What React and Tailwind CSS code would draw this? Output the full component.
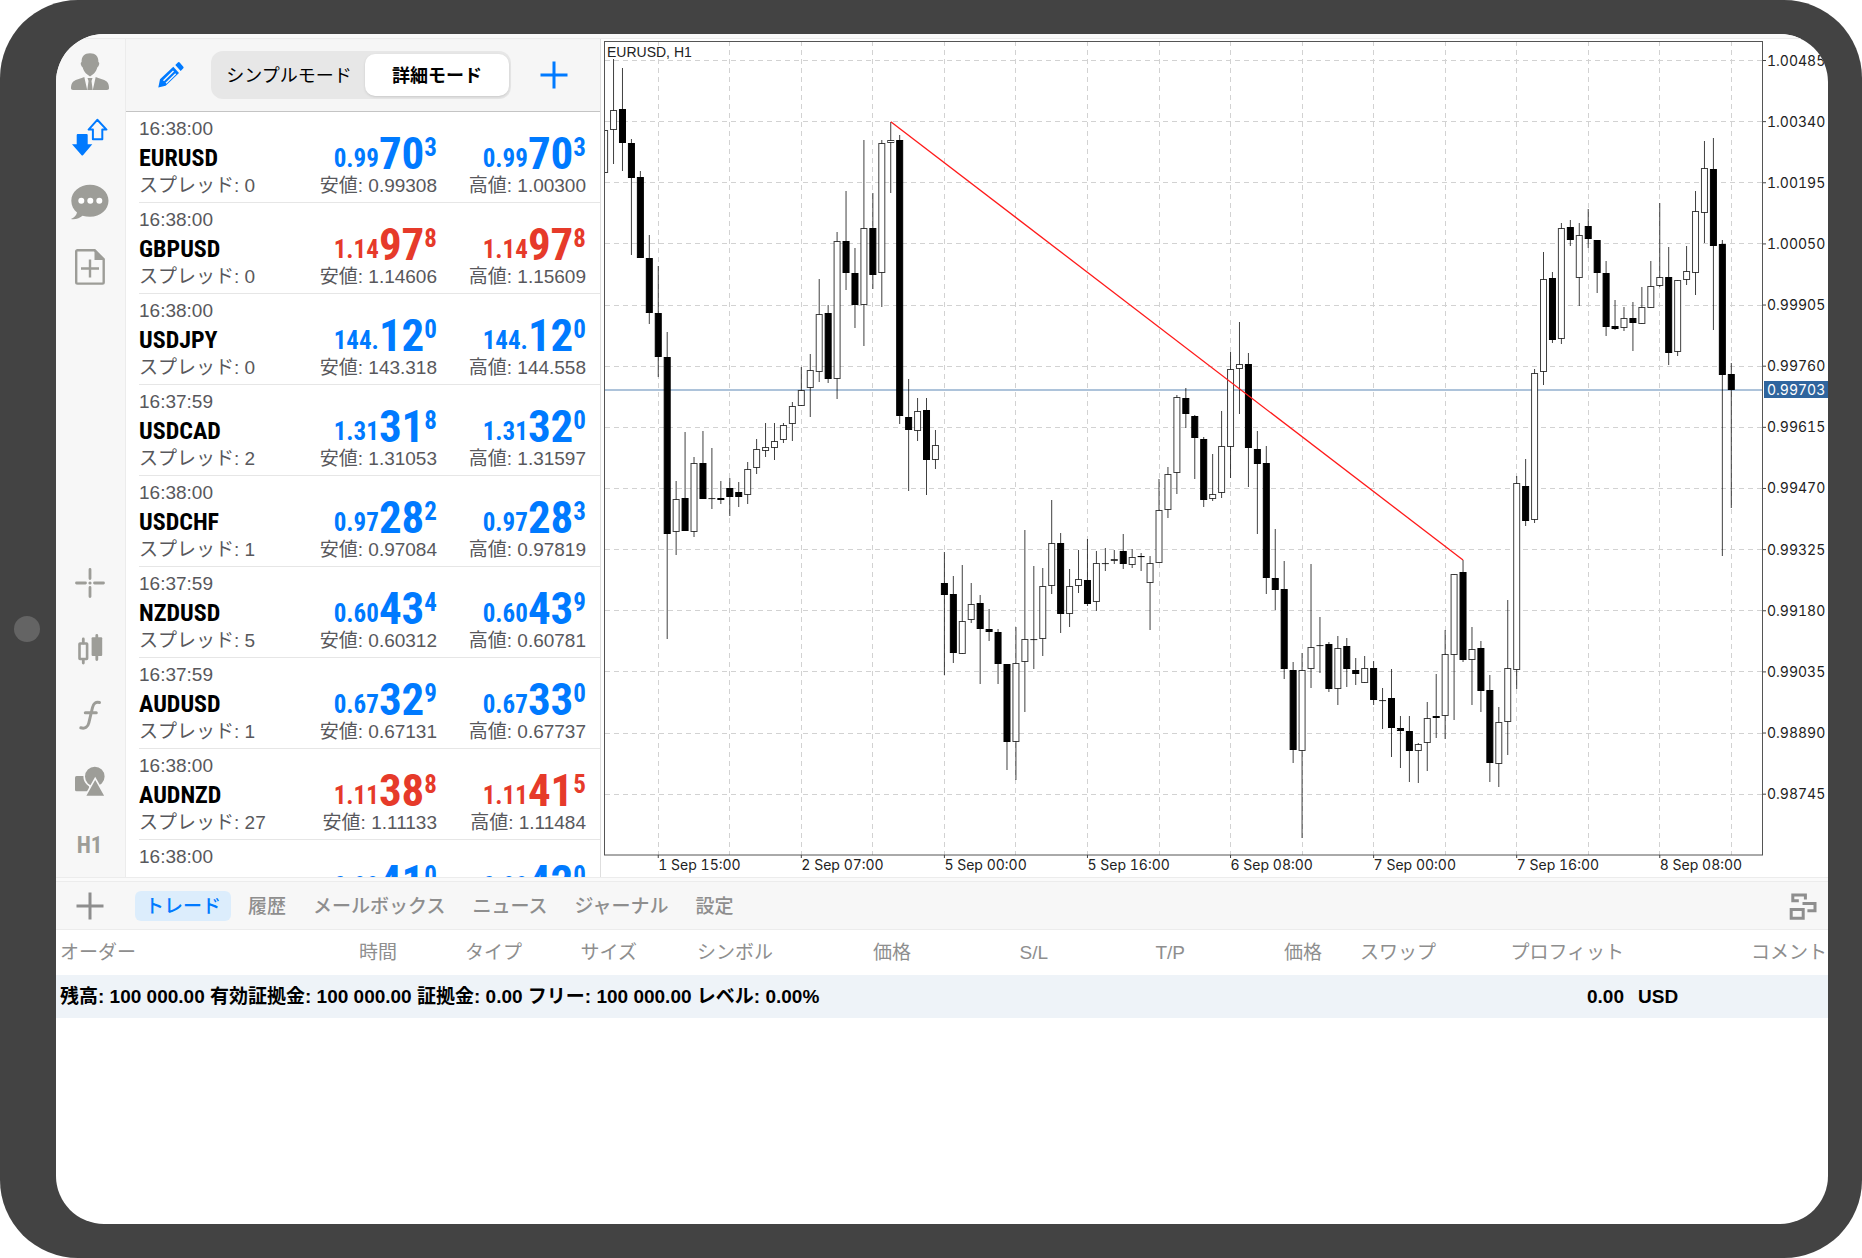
import React, { useState } from "react";

const quotes = [
  { time: "16:38:00", symbol: "EURUSD", spread: 0, low: "0.99308", high: "1.00300", bid: ["0.99", "70", "3"], ask: ["0.99", "70", "3"], up: true },
  { time: "16:38:00", symbol: "GBPUSD", spread: 0, low: "1.14606", high: "1.15609", bid: ["1.14", "97", "8"], ask: ["1.14", "97", "8"], up: false },
  { time: "16:38:00", symbol: "USDJPY", spread: 0, low: "143.318", high: "144.558", bid: ["144.", "12", "0"], ask: ["144.", "12", "0"], up: true },
  { time: "16:37:59", symbol: "USDCAD", spread: 2, low: "1.31053", high: "1.31597", bid: ["1.31", "31", "8"], ask: ["1.31", "32", "0"], up: true },
  { time: "16:38:00", symbol: "USDCHF", spread: 1, low: "0.97084", high: "0.97819", bid: ["0.97", "28", "2"], ask: ["0.97", "28", "3"], up: true },
  { time: "16:37:59", symbol: "NZDUSD", spread: 5, low: "0.60312", high: "0.60781", bid: ["0.60", "43", "4"], ask: ["0.60", "43", "9"], up: true },
  { time: "16:37:59", symbol: "AUDUSD", spread: 1, low: "0.67131", high: "0.67737", bid: ["0.67", "32", "9"], ask: ["0.67", "33", "0"], up: true },
  { time: "16:38:00", symbol: "AUDNZD", spread: 27, low: "1.11133", high: "1.11484", bid: ["1.11", "38", "8"], ask: ["1.11", "41", "5"], up: false },
  { time: "16:38:00", symbol: "AUDCAD", bid: ["0.88", "41", "0"], ask: ["0.88", "42", "0"], up: true },
];

// [falling, high, body top, body bottom, low]
const candles = [
  [0, 130, 130, 173, 173], [0, 59, 110, 130, 164], [1, 68, 109, 143, 171], [1, 139, 143, 178, 255],
  [1, 171, 177, 258, 258], [1, 235, 258, 313, 324], [1, 266, 313, 357, 377], [1, 332, 357, 534, 639],
  [0, 481, 499, 532, 555], [1, 432, 498, 531, 531], [0, 457, 463, 532, 537], [1, 431, 463, 499, 499],
  [0, 448, 498, 498, 509], [1, 481, 498, 500, 504], [1, 478, 488, 497, 516], [1, 482, 492, 497, 507],
  [0, 462, 469, 495, 504], [0, 439, 449, 468, 474], [0, 423, 447, 451, 457], [0, 423, 441, 448, 460],
  [0, 423, 425, 440, 443], [0, 402, 406, 424, 441], [0, 367, 390, 406, 406], [0, 354, 370, 388, 417],
  [0, 279, 314, 372, 382], [1, 305, 313, 379, 383], [0, 232, 241, 379, 399], [1, 191, 241, 273, 290],
  [1, 248, 273, 305, 328], [0, 140, 228, 305, 346], [1, 193, 228, 275, 289], [0, 140, 143, 273, 307],
  [0, 122, 140, 143, 193], [1, 135, 140, 416, 424], [1, 379, 417, 430, 491], [0, 398, 411, 431, 441],
  [1, 398, 410, 460, 495], [0, 430, 445, 460, 469], [1, 552, 583, 595, 675], [1, 576, 594, 653, 663],
  [0, 565, 621, 654, 654], [0, 583, 604, 620, 623], [1, 595, 603, 629, 684], [1, 609, 629, 632, 641],
  [1, 629, 632, 664, 684], [1, 664, 664, 742, 770], [0, 627, 663, 742, 780], [0, 530, 639, 662, 712],
  [0, 566, 639, 639, 669], [0, 568, 586, 639, 656], [0, 500, 543, 586, 594], [1, 533, 543, 614, 633],
  [0, 569, 586, 614, 627], [0, 550, 579, 586, 593], [1, 539, 580, 604, 606], [0, 551, 563, 602, 611],
  [0, 548, 563, 563, 571], [0, 550, 559, 561, 564], [1, 534, 551, 564, 569], [0, 549, 557, 565, 568],
  [1, 553, 556, 557, 571], [0, 556, 563, 583, 630], [0, 479, 510, 563, 563], [0, 467, 474, 510, 518],
  [0, 395, 397, 473, 494], [1, 388, 398, 414, 428], [1, 415, 416, 438, 479], [1, 437, 439, 500, 507],
  [0, 454, 494, 499, 501], [0, 411, 446, 493, 498], [0, 352, 369, 447, 478], [0, 322, 364, 369, 414],
  [1, 353, 364, 448, 487], [1, 431, 449, 464, 534], [1, 446, 463, 578, 594], [1, 529, 578, 590, 610],
  [1, 561, 589, 669, 679], [1, 662, 670, 750, 763], [0, 653, 670, 751, 838], [0, 564, 647, 669, 688],
  [0, 617, 645, 645, 673], [1, 642, 644, 689, 692], [0, 636, 648, 689, 705], [1, 638, 646, 669, 687],
  [1, 658, 670, 674, 685], [0, 656, 668, 683, 683], [1, 661, 668, 700, 705], [0, 688, 700, 700, 729],
  [1, 669, 698, 728, 757], [1, 716, 728, 731, 768], [1, 716, 731, 751, 782], [0, 743, 744, 751, 783],
  [0, 702, 718, 743, 771], [1, 674, 716, 718, 738], [0, 630, 654, 716, 739], [0, 574, 574, 655, 720],
  [1, 560, 572, 660, 662], [0, 627, 649, 660, 705], [1, 641, 648, 691, 712], [1, 675, 690, 763, 782],
  [0, 707, 722, 764, 787], [0, 600, 668, 722, 755], [0, 476, 483, 670, 689], [1, 459, 486, 521, 526],
  [0, 369, 373, 520, 523], [0, 252, 279, 372, 385], [1, 272, 278, 340, 343], [0, 223, 228, 339, 344],
  [1, 220, 227, 240, 246], [0, 223, 235, 278, 306], [1, 209, 226, 239, 248], [1, 240, 240, 273, 293],
  [1, 261, 273, 327, 336], [1, 300, 326, 329, 330], [0, 307, 318, 328, 331], [1, 302, 318, 323, 351],
  [0, 287, 307, 324, 324], [0, 261, 286, 308, 308], [0, 203, 277, 286, 287], [1, 247, 277, 353, 365],
  [0, 280, 280, 352, 356], [0, 246, 271, 280, 285], [0, 191, 211, 273, 295], [0, 141, 168, 213, 243],
  [1, 138, 169, 246, 330], [1, 240, 244, 375, 556], [1, 363, 374, 390, 508],
];

const prices = ["1.00485", "1.00340", "1.00195", "1.00050", "0.99905", "0.99760", "0.99615", "0.99470", "0.99325", "0.99180", "0.99035", "0.98890", "0.98745"];
const times = ["1 Sep 15:00", "2 Sep 07:00", "5 Sep 00:00", "5 Sep 16:00", "6 Sep 08:00", "7 Sep 00:00", "7 Sep 16:00", "8 Sep 08:00"];

const tabs = ["トレード", "履歴", "メールボックス", "ニュース", "ジャーナル", "設定"];

const columns = [
  { title: "オーダー", width: "w-[163px]", align: "text-left" },
  { title: "時間", width: "w-[178px]", align: "text-right" },
  { title: "タイプ", width: "w-[125px]", align: "text-right" },
  { title: "サイズ", width: "w-[115px]", align: "text-right" },
  { title: "シンボル", width: "w-[136px]", align: "text-right" },
  { title: "価格", width: "w-[138px]", align: "text-right" },
  { title: "S/L", width: "w-[137px]", align: "text-right" },
  { title: "T/P", width: "w-[137px]", align: "text-right" },
  { title: "価格", width: "w-[137px]", align: "text-right" },
  { title: "スワップ", width: "w-[114px]", align: "text-right" },
  { title: "プロフィット", width: "w-[188px]", align: "text-right" },
  { title: "コメント", width: "w-auto", align: "text-right" },
];

const candleX = (i) => 604.6 + i * 8.942;
const gridY = (i) => 60.5 + i * 61.14;

const Icon = ({ children }) => (
  <svg viewBox="0 0 40 40" className="w-10 h-10" fill="currentColor" aria-hidden="true">
    {children}
  </svg>
);

const UserIcon = () => (
  <Icon>
    <path d="M20 1.3C14.5 1.3 11.4 4.6 11.6 10c-1 .4-1 1.6-.6 2.8.3 1.2.8 2.2 1.6 2.4.6 2.600 2 4.700 3.400 6.300L20 24.500l4-3c1.400-1.600 2.800-3.700 3.400-6.300.8-.2 1.300-1.200 1.600-2.400.4-1.200.4-2.400-.6-2.800C28.600 4.600 25.500 1.300 20 1.300z" />
    <path d="M14.300 25c-3 1.500-8.300 2.300-11 4.600C1.300 31.500 1 34 1 36.300c0 1 .8 1.700 2 1.700h14.200z" />
    <path d="M25.700 25c3 1.500 8.300 2.300 11 4.600 2 1.900 2.300 4.400 2.300 6.700 0 1-.8 1.700-2 1.700H22.800z" />
    <path d="M17.500 26h5l-1 3 1.200 9h-5.400l1.200-9z" />
  </Icon>
);

const ArrowsIcon = () => (
  <Icon>
    <path d="M6.700 18.200c0-.7.500-1.200 1.200-1.200h8.600c.7 0 1.200.5 1.200 1.200v9.100h4.600L13 38.200a1 1 0 0 1-1.400 0L2 27.300h4.700z" />
    <path d="M27.300 2.800L18.600 12.600h4.300v9.700h9.400v-9.700h4.200z" fill="none" stroke="currentColor" strokeWidth="2" strokeLinejoin="round" />
  </Icon>
);

const ChatIcon = () => (
  <Icon>
    <path d="M20 2.700C9.500 2.700 1.300 9.800 1.300 18.700c0 5 2.300 8.900 5.700 11.800-.6 2.500-2.600 5.200-6 6.500 4.400.7 9-.8 11.500-3.200 2.400.6 4.900.9 7.500.9 10.500 0 18.500-7.100 18.500-16S30.500 2.700 20 2.700z" />
    <circle cx="11.300" cy="18.700" r="3" fill="#fff" />
    <circle cx="20.300" cy="18.700" r="3" fill="#fff" />
    <circle cx="29.300" cy="18.700" r="3" fill="#fff" />
  </Icon>
);

const NewOrderIcon = () => (
  <Icon>
    <path d="M7.500 3.300h17.200l9 9v23a1.300 1.300 0 0 1-1.300 1.300H7.500a1.300 1.300 0 0 1-1.300-1.300V4.600a1.300 1.300 0 0 1 1.300-1.300z" fill="none" stroke="currentColor" strokeWidth="2.400" />
    <path d="M24.500 3v10h10z" />
    <path d="M11 21.500h18M20 12.500v18" fill="none" stroke="currentColor" strokeWidth="2.400" />
  </Icon>
);

const CrosshairIcon = () => (
  <Icon>
    <path d="M6.500 20h9M24.500 20h9M20 6.500v9M20 24.500v9" fill="none" stroke="currentColor" strokeWidth="2.800" strokeLinecap="round" />
    <circle cx="20" cy="20" r="1.600" />
  </Icon>
);

const CandlesIcon = () => (
  <Icon>
    <path d="M13.300 10v4M13.300 31v3M26.800 6.500v24" fill="none" stroke="currentColor" strokeWidth="2.800" strokeLinecap="round" />
    <rect x="9.500" y="14.500" width="7.600" height="15.500" rx=".5" fill="none" stroke="currentColor" strokeWidth="2.600" />
    <rect x="21.600" y="8.300" width="10.600" height="18.600" rx="1" />
  </Icon>
);

const FunctionIcon = () => (
  <Icon>
    <path d="M29.500 7.500c-3.800-1-6 1-7 5l-3.700 15.500c-1 4-3.500 6-8 4.800M15.300 17.800h11" fill="none" stroke="currentColor" strokeWidth="3" strokeLinecap="round" />
  </Icon>
);

const ShapesIcon = () => (
  <Icon>
    <rect x="5" y="15" width="14" height="15.300" rx="1.500" />
    <circle cx="24.800" cy="15.500" r="10.600" stroke="#f7f7f7" strokeWidth="1.600" />
    <path d="M25.200 17.300l10.300 18.200H15z" stroke="#f7f7f7" strokeWidth="1.600" />
  </Icon>
);

const PlusIcon = () => (
  <Icon>
    <path d="M6.500 20h27M20 6.500v27" fill="none" stroke="currentColor" strokeWidth="3" />
  </Icon>
);

const WindowsIcon = () => (
  <Icon>
    <path d="M16.800 14.800h-6V9h12.600v4.500M20.500 17.500H33v7.200h-7.600M9.200 23.500h12v8.700h-12z" fill="none" stroke="currentColor" strokeWidth="3" />
  </Icon>
);

const PencilIcon = () => (
  <svg viewBox="0 0 26 26" className="w-[26px] h-[26px]" fill="currentColor" aria-hidden="true">
    <path d="M17.300 3L19.600.7a1.600 1.600 0 0 1 2.300 0l3.200 3.700a1.600 1.600 0 0 1 0 2.200L22.700 9z" />
    <path fillRule="evenodd" d="M15.300 4.700l5.700 6.300L7.600 23.800.3 25.600 2 17.300zM15 8.600L5 18.200l1 1L16 9.600zM17.200 11.200L7.500 20.700l1 1 9.700-9.500z" />
  </svg>
);

const sideTop = [
  { label: "アカウント", icon: <UserIcon />, color: "text-[#9d9d98]" },
  { label: "気配値", icon: <ArrowsIcon />, color: "text-[#007aff]" },
  { label: "チャット", icon: <ChatIcon />, color: "text-[#9d9d98]" },
  { label: "新規オーダー", icon: <NewOrderIcon />, color: "text-[#9d9d98]" },
];

const sideBottom = [
  { label: "十字カーソル", icon: <CrosshairIcon /> },
  { label: "チャートタイプ", icon: <CandlesIcon /> },
  { label: "インディケータ", icon: <FunctionIcon /> },
  { label: "オブジェクト", icon: <ShapesIcon /> },
];

const Price = ({ parts, up }) => (
  <div className={`flex justify-end items-end font-bold font-['Liberation_Sans_Narrow','Roboto_Condensed',Roboto,sans-serif] ${up ? "text-[#007aff]" : "text-[#e63a2a]"}`}>
    <span className="text-[25px] leading-[26px]">{parts[0]}</span>
    <span className="text-[45px] leading-[36px]">{parts[1]}</span>
    <span className="text-[25px] leading-[24px] self-start">{parts[2]}</span>
  </div>
);

const QuoteRow = ({ quote }) => (
  <li className="ml-[13px] pr-[14px] h-[91px] shrink-0 border-b border-[#e6e6e6] flex text-[19px] leading-[28px] text-[#58585c]">
    <div className="flex-1 pt-[3px]">
      <p>{quote.time}</p>
      <p className="pt-px text-[24px] leading-[28px] font-bold text-black font-['Liberation_Sans_Narrow','Roboto_Condensed',Roboto,sans-serif]">
        {quote.symbol}
      </p>
      {quote.spread !== undefined && <p>スプレッド: {quote.spread}</p>}
    </div>
    <div className="w-[148px] pt-[24px] text-right">
      <Price parts={quote.bid} up={quote.up} />
      {quote.low && <p>安値: {quote.low}</p>}
    </div>
    <div className="w-[149px] pt-[24px] text-right">
      <Price parts={quote.ask} up={quote.up} />
      {quote.high && <p>高値: {quote.high}</p>}
    </div>
  </li>
);

const Chart = () => (
  <svg viewBox="601 39 1227 838" className="block w-full h-auto font-[Inter,sans-serif] tabular-nums" role="img" aria-label="EURUSD, H1">
    <defs>
      <clipPath id="plot">
        <rect x="605" y="41" width="1158" height="814" />
      </clipPath>
    </defs>

    {/* Grid */}
    <g stroke="#d2d2d2" strokeDasharray="5 4" shapeRendering="crispEdges">
      {prices.map((price, i) => (
        <line key={price} x1="605" x2="1762" y1={gridY(i)} y2={gridY(i)} />
      ))}
      {Array.from({ length: 16 }, (_, i) => (
        <line key={i} x1={candleX(6 + i * 8)} x2={candleX(6 + i * 8)} y1="41" y2="855" />
      ))}
    </g>
    <line x1="605" x2="1762" y1="390" y2="390" stroke="#adc3da" strokeWidth="2" />

    {/* Candles */}
    <g clipPath="url(#plot)" stroke="#000">
      {candles.map(([falling, high, top, bottom, low], i) => (
        <g key={i}>
          <line x1={candleX(i)} x2={candleX(i)} y1={high} y2={low} strokeOpacity=".75" />
          <rect
            x={candleX(i) - 3}
            y={top + 0.5}
            width="6"
            height={Math.max(bottom - top - 1, 0.1)}
            fill={falling ? "#000" : "#fff"}
            strokeOpacity={falling ? 1 : 0.75}
          />
        </g>
      ))}
    </g>
    <line x1="890.800" y1="121.700" x2="1463" y2="560" stroke="#ff1a1a" strokeWidth="1.300" />

    {/* Frame and axes */}
    <rect x="604.500" y="41.500" width="1158" height="813.500" fill="none" stroke="#555" />
    <text x="607" y="57" fontSize="14" fill="#222" className="font-['Liberation_Sans',sans-serif]">EURUSD, H1</text>
    <g fontSize="14" fill="#222">
      {prices.map((price, i) => (
        <g key={price}>
          <line x1="1763" x2="1766" y1={gridY(i)} y2={gridY(i)} stroke="#444" />
          <text x="1767" y={gridY(i) + 5}>{price}</text>
        </g>
      ))}
      {times.map((time, i) => (
        <g key={time}>
          <line x1={candleX(6 + i * 16)} x2={candleX(6 + i * 16)} y1="855" y2="858" stroke="#444" />
          <text x={candleX(6 + i * 16)} y="870">{time}</text>
        </g>
      ))}
    </g>
    <rect x="1764" y="381" width="64" height="17" fill="#2f659e" />
    <text x="1767" y="395" fontSize="14" fill="#fff">0.99703</text>
  </svg>
);

const App = () => {
  const [mode, setMode] = useState("detail");
  const [activeTab, setActiveTab] = useState("トレード");

  const modes = [
    { id: "simple", title: "シンプルモード", width: "w-[152px]" },
    { id: "detail", title: "詳細モード", width: "w-[144px]" },
  ];

  return (
    <div className="min-h-screen bg-white flex font-['Liberation_Sans','Noto_Sans_CJK_JP',sans-serif]">
      {/* Tablet body */}
      <div className="flex-1 min-w-0 bg-[#434343] rounded-[78px] py-[34px] pr-[34px] flex items-stretch">
        <div className="w-14 pr-[2px] shrink-0 flex items-center justify-center">
          <div className="w-[26px] h-[26px] rounded-full bg-[#646464]" />
        </div>

        {/* Screen */}
        <div className="flex-1 min-w-0 bg-white rounded-[48px] overflow-hidden flex flex-col">
          <div className="h-[5px] bg-[#fafafa] border-b border-[#ececec]" />

          <div className="flex">
            {/* Tool bar */}
            <nav className="w-[70px] pr-[2px] shrink-0 bg-[#f7f7f7] border-r border-[#ececec] flex flex-col items-center justify-between">
              <div className="flex flex-col">
                {sideTop.map(({ label, icon, color }) => (
                  <button key={label} aria-label={label} className={`h-[65px] flex items-center ${color}`}>
                    {icon}
                  </button>
                ))}
              </div>
              <div className="flex flex-col text-[#9d9d98]">
                {sideBottom.map(({ label, icon }) => (
                  <button key={label} aria-label={label} className="h-[66px] flex items-center">
                    {icon}
                  </button>
                ))}
                <button className="h-[63px] pt-[2px] text-[23px] font-bold font-['Liberation_Sans_Narrow','Roboto_Condensed',Roboto,sans-serif]">
                  H1
                </button>
              </div>
            </nav>

            {/* Quotes */}
            <section className="w-[475px] shrink-0 border-r border-[#dedede] flex flex-col">
              <header className="h-[73px] shrink-0 bg-[#f6f6f6] border-b border-[#c4c4c4] pl-8 pr-[26px] flex items-center justify-between">
                <button aria-label="編集" className="w-[30px] text-[#007aff]">
                  <PencilIcon />
                </button>
                <div className="h-12 p-[2px] rounded-xl bg-[#e7e7e7] flex items-center text-[18px]">
                  {modes.map(({ id, title, width }) => (
                    <button
                      key={id}
                      onClick={() => setMode(id)}
                      className={`h-[42px] pt-[2px] ${width} rounded-[10px] whitespace-nowrap text-black ${mode === id ? "bg-white font-bold shadow" : ""}`}
                    >
                      {title}
                    </button>
                  ))}
                </div>
                <button aria-label="シンボルを追加" className="text-[#007aff]">
                  <PlusIcon />
                </button>
              </header>
              <ul className="flex-1 basis-0 min-h-0 overflow-hidden flex flex-col">
                {quotes.map((quote) => (
                  <QuoteRow key={quote.symbol} quote={quote} />
                ))}
              </ul>
            </section>

            {/* Chart */}
            <main className="flex-1 min-w-0">
              <Chart />
            </main>
          </div>

          {/* Tabs */}
          <div className="h-[5px] shrink-0 bg-[#fafafa] border-y border-[#ececec]" />
          <div className="h-[48px] shrink-0 bg-[#f7f7f7] border-b border-[#ececec] pl-[14px] pr-[6px] flex items-center">
            <button aria-label="追加" className="text-[#8e8e8e]">
              <PlusIcon />
            </button>
            <div className="ml-[25px] flex-1 flex gap-[7px]">
              {tabs.map((tab) => (
                <button
                  key={tab}
                  onClick={() => setActiveTab(tab)}
                  className={`h-[30px] px-[10px] rounded-md text-[19px] leading-[32px] font-medium whitespace-nowrap ${activeTab === tab ? "bg-[#dcedfc] text-[#007aff]" : "text-[#8e8e8e]"}`}
                >
                  {tab}
                </button>
              ))}
            </div>
            <button aria-label="ウィンドウ" className="text-[#8e8e8e]">
              <WindowsIcon />
            </button>
          </div>

          {/* Trade table */}
          <table className="w-full table-fixed text-[19px] whitespace-nowrap">
            <thead>
              <tr className="h-[45px] text-[#8e8e8e]">
                {columns.map(({ title, width, align }, i) => (
                  <th key={i} className={`${width} ${align} pt-[2px] font-normal first:pl-1 last:pr-px`}>
                    {title}
                  </th>
                ))}
              </tr>
            </thead>
            <tbody>
              <tr className="h-[43px] bg-[#eef3f8] font-bold">
                <td colSpan={10} className="pl-1 pt-[2px]">
                  残高: 100 000.00 有効証拠金: 100 000.00 証拠金: 0.00 フリー: 100 000.00 レベル: 0.00%
                </td>
                <td className="pt-[2px] text-right">0.00</td>
                <td className="pt-[2px] pl-[14px]">USD</td>
              </tr>
            </tbody>
          </table>
        </div>
      </div>
    </div>
  );
};

export default App;
